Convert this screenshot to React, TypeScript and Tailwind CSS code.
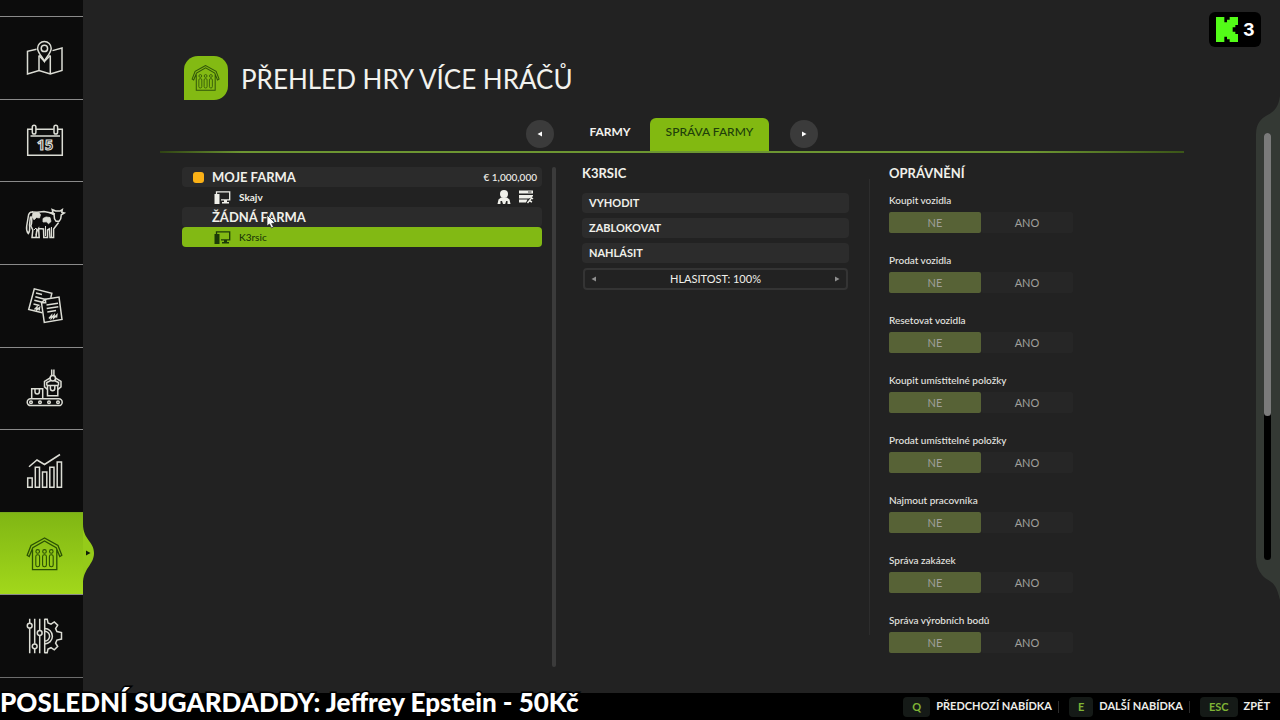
import { useState, type ReactNode } from "react";
import clsx from "clsx";

function Icon({ children, size = 36 }: { children: ReactNode; size?: number }) {
  return (
    <svg
      width={size}
      height={size}
      viewBox="0 0 36 36"
      fill="none"
      stroke="currentColor"
      strokeWidth={1.5}
      className="shrink-0 overflow-visible"
      aria-hidden="true"
    >
      {children}
    </svg>
  );
}

function MapIcon() {
  return (
    <Icon>
      <path d="M9.5 9.2 .5 11.3V34L12 30.5 23.3 34 35 30.5V8l-9.5 2.6M12 30.5V15.5M23.3 34V15.5" />
      <path d="M12 15.5 17.4 21.3 23.3 15.5" />
      <path d="M17.4 21.3C15.5 17 10.6 13 10.6 8.3a6.8 6.8 0 0 1 13.6 0c0 4.7-4.9 8.7-6.8 13Z" />
      <circle cx="17.4" cy="8.4" r="3.2" />
    </Icon>
  );
}

function CalendarIcon() {
  return (
    <Icon>
      <path d="M5 7.3H.7v26h34.6v-26H31M9 7.3h17.8M3.5 14h29.5" />
      <rect x="5.3" y="3.2" width="3.6" height="8.8" rx="1.8" />
      <rect x="27" y="3.2" width="3.6" height="8.8" rx="1.8" />
      <text
        x="18"
        y="28"
        textAnchor="middle"
        strokeWidth="1.2"
        className="font-['Open_Sans',sans-serif] text-[14px] font-bold"
      >
        15
      </text>
    </Icon>
  );
}

function CowIcon() {
  return (
    <Icon>
      <path d="M6 7C3 6.6 1.5 8.5 1.2 12L-.3 21c-.5 3 0 5.5 1.6 7.5C3.3 26 2.7 23 2.5 20L3.5 11.5" />
      <path d="M5 7l5 .2 7-.8 7.5 1.6 3.5 1M4 11.5c1.5 4 1 6-.2 9.5l2 4-.8 7.6h4l.6-6 2-3 .6 9h-3M12 23.5l4.5.5.3 8.6h3.7V25l2-1.2.5 8.8h3.6V24l5-6.5" />
      <path d="M27.5 5.5l-2.3-1 .8 2.7-2.5.8 3.6 1.8.4 4 1.6 2.5h3l1.6-2.5.6-4 3-1.8-2.5-.8.5-2.5-2 1.3h-4.8Z" />
      <path
        d="M6 8l6-.3 1.5 2-1 3.3-3-.5-2.5 2.3L5 12ZM16 13.5l3-1.5 4 .5 1 4-2.5 2.3-2-2L16 17Z"
        fill="currentColor"
        strokeWidth=".8"
      />
      <path d="M7 25l2-2 1 3-1 4M18.5 21v10M24.5 22v10" strokeWidth="1" />
    </Icon>
  );
}

function ContractsIcon() {
  return (
    <Icon>
      <path d="M15.3 24.8 1.7 21.5 7.3.8l17.5 4.5-1 4.5" />
      <path d="M18.2 11.3 32 9l3 22.5-17.7 3-2.8-19.7ZM14.5 14.8l4.2 0-.5-3.5" />
      <path d="M9 5l6 1.5M8.3 8.8 19.5 11.7M7.3 12.3l8 2M6.5 16l6 1.5" />
      <path d="M19.5 17l11.5-1.7M19.7 20.5 31.3 18.8M20.3 24 29 22.6" />
      <path d="M7.5 21.5l2.5-2.5-.3 3 2.8-2.5-.3 3M22 30.5l2.5-3-.2 2.7 2.8-3-.3 2.8 3-3-.3 2.7" />
    </Icon>
  );
}

function ProductionIcon() {
  return (
    <Icon>
      <rect x=".2" y="28.8" width="35" height="6.8" rx="3.4" />
      <circle cx="4" cy="32.2" r="1.3" />
      <circle cx="13" cy="32.2" r="1.3" />
      <circle cx="22" cy="32.2" r="1.3" />
      <circle cx="31" cy="32.2" r="1.3" />
      <path d="M4.7 28.8V18.7h11v10.1M8 18.7v3a2.2 2.2 0 0 0 4.4 0v-3" />
      <path d="M20.5 15.5h10.3v10.3H20.5ZM23.4 15.5v3a2.2 2.2 0 0 0 4.4 0v-3" />
      <path d="M24.7-.5v6M26.9-.5v6M23.2 7.8 17.5 11.3v5.5l3 2.5M28.3 7.8 34 11.3v5.5l-3 2.5M19.8 15.5v-3l4-2M31.5 15.5v-3l-4-2" />
      <circle cx="25.8" cy="8.3" r="2.7" />
    </Icon>
  );
}

function StatsIcon() {
  return (
    <Icon>
      <path d="M.7 25h4.5v9.3H.7ZM8.3 14.3h4.2v20H8.3ZM15.5 19h4.3v15.3h-4.3ZM22.8 14.3H27v20h-4.2ZM30.2 9h4.3v25.3h-4.3Z" />
      <path d="M2 13.7 10 7l7.5 4.5L33 1.5" />
    </Icon>
  );
}

function FarmIcon({ size }: { size?: number }) {
  return (
    <Icon size={size}>
      <path
        d="M17.5 2 4 9.5.2 19.3l2 1.2 3.6-8.7L17.5 5l11.7 6.8 3.6 8.7 2-1.2L31 9.5ZM5.5 13.5v20.2h24.3V13.5"
        strokeWidth="1.3"
      />
      {[10.7, 17.5, 24.3].map((x) => (
        <g key={x} strokeWidth="1.1">
          <circle cx={x} cy="15.4" r="1.8" />
          <rect x={x - 1.9} y="18.8" width="3.8" height="12" rx="1.7" />
        </g>
      ))}
    </Icon>
  );
}

function SettingsIcon() {
  return (
    <Icon>
      <path d="M2.7.7v4.5M2.7 10.2v25M7.7.7v25M7.7 30.8v4.5M12.7.7v11.8M12.7 17.5v17.8M17.7.7v34.6" />
      <circle cx="2.7" cy="7.7" r="2.4" />
      <circle cx="7.7" cy="28.3" r="2.4" />
      <circle cx="12.7" cy="15" r="2.4" />
      <path d="M17.7 1.2h2.5l.8 3.7 3 1.2 3.3-2.2 3.4 3.3-2.1 3.4 1.3 3 4.6 1v6.5l-4.6 1-1.3 3 2.1 3.4-3.4 3.4-3.3-2.2-3 1.3-.8 3.7h-2.5" />
      <path d="M17.7 10.5a7.7 7.7 0 0 1 0 15.4M17.7 13.3a4.9 4.9 0 0 1 0 9.8" />
    </Icon>
  );
}

const pages = [
  { name: "Mapa", icon: <MapIcon /> },
  { name: "Kalendář", icon: <CalendarIcon /> },
  { name: "Zvířata", icon: <CowIcon /> },
  { name: "Zakázky", icon: <ContractsIcon /> },
  { name: "Výroba", icon: <ProductionIcon /> },
  { name: "Statistiky", icon: <StatsIcon /> },
  { name: "Více hráčů", icon: <FarmIcon /> },
  { name: "Nastavení", icon: <SettingsIcon /> },
];

const permissions = [
  "Koupit vozidla",
  "Prodat vozidla",
  "Resetovat vozidla",
  "Koupit umístitelné položky",
  "Prodat umístitelné položky",
  "Najmout pracovníka",
  "Správa zakázek",
  "Správa výrobních bodů",
];

const shortcuts = [
  { key: "Q", label: "PŘEDCHOZÍ NABÍDKA" },
  { key: "E", label: "DALŠÍ NABÍDKA" },
  { key: "ESC", label: "ZPĚT" },
];

function Sidebar() {
  return (
    <nav className="flex w-[83px] shrink-0 flex-col bg-[#0c0c0c] pt-4 pb-[15px]">
      <ul className="grid flex-1 auto-rows-fr border-b border-[#6d6d6d]">
        {pages.map((page) => {
          const active = page.name === "Více hráčů";
          return (
            <li key={page.name} className="relative">
              <button
                aria-label={page.name}
                className={clsx(
                  "flex h-full w-full items-center justify-center border-t pl-[7px]",
                  active
                    ? "border-[#77a81c] bg-linear-to-b from-[#80b614] to-[#a2d81b] text-[#2b5204]"
                    : "border-[#8a8a8a] text-[#dcddd5]",
                )}
              >
                {page.icon}
              </button>
              {active && (
                <svg
                  className="absolute top-3 left-full"
                  width="12"
                  height="60"
                  viewBox="0 0 12 60"
                  aria-hidden="true"
                >
                  <path
                    d="M0 0C0 16 11 17 11 29S0 44 0 60Z"
                    fill="#95cb19"
                  />
                  <path d="M3 26.5 7.5 29 3 31.5Z" fill="#10200a" />
                </svg>
              )}
            </li>
          );
        })}
      </ul>
    </nav>
  );
}

function Arrow({ left = false }: { left?: boolean }) {
  return (
    <svg width="6" height="6" viewBox="0 0 6 6" fill="currentColor" aria-hidden="true">
      <path d={left ? "M5 .5v5L.5 3Z" : "M1 .5v5L5.5 3Z"} />
    </svg>
  );
}

function Tabs() {
  return (
    <div className="mt-[18px] flex flex-col">
      <div className="flex justify-center">
        <button
          aria-label="Předchozí karta"
          className="mt-0.5 flex size-7 items-center justify-center rounded-full bg-[#3b3b3b] text-white"
        >
          <Arrow left />
        </button>
        <div role="tablist" className="mr-[21px] ml-[22px] flex h-[33px] text-xs">
          <button
            role="tab"
            aria-selected={false}
            className="w-[74px] pr-1.5 pb-1.5 text-center font-bold text-[#f2f2ee]"
          >
            FARMY
          </button>
          <button
            role="tab"
            aria-selected={true}
            className="w-[119px] rounded-t-md bg-[#82b911] pb-1.5 text-center font-medium text-[#20400a]"
          >
            SPRÁVA FARMY
          </button>
        </div>
        <button
          aria-label="Další karta"
          className="mt-0.5 flex size-7 items-center justify-center rounded-full bg-[#3b3b3b] text-white"
        >
          <Arrow />
        </button>
      </div>
      <div className="h-0.5 bg-[linear-gradient(to_right,#2f4214,#6d9632_8%,#6d9632_85%,#3b5518)]" />
    </div>
  );
}

function ComputerIcon() {
  return (
    <svg width="17" height="13" viewBox="0 0 17 13" fill="currentColor" aria-hidden="true">
      <path d="M.5 3h5v10h-5Z" />
      <path d="M2.5 3V.8h13.2v8H7" fill="none" stroke="currentColor" strokeWidth="1.3" />
      <path d="M10 9h3v2h2v1.5H8V11h2Z" />
    </svg>
  );
}

function FarmList() {
  return (
    <section className="flex-[360] text-[#f0f0ea]">
      <div className="flex h-5 items-center rounded-sm bg-[#2b2b2b] pr-[5px] pl-[11px]">
        <span className="mr-2 size-[11px] rounded-[3px] bg-[#fbb116]" />
        <h2 className="pt-0.5 text-[13px] font-bold">MOJE FARMA</h2>
        <span className="ml-auto text-[10px] font-medium">€ 1,000,000</span>
      </div>
      <button className="flex h-5 w-full items-center gap-2 pr-2 pl-[32px] text-[10px] font-bold">
        <ComputerIcon />
        Skajv
        <svg
          className="ml-auto"
          width="14"
          height="14"
          viewBox="0 0 14 14"
          fill="currentColor"
          aria-hidden="true"
        >
          <circle cx="7" cy="4" r="4" />
          <path d="M4 7.5h6l2.5 2 1 4.5h-3V11h-1.3l-1 3H6l-1-3H3.5v3h-3l1-4.5Z" />
        </svg>
        <svg
          width="15"
          height="14"
          viewBox="0 0 15 14"
          fill="currentColor"
          aria-hidden="true"
        >
          <path d="M0 .5h14v3H0ZM0 5h14v1.2l-4 2.3H0ZM0 9.5h8.5L7 12.5H0Z" />
          <path d="M8.5 13 13 7.5M11.5 7l2.5 2M10 10.5l3 1.5" stroke="currentColor" strokeWidth="1.4" />
          <path d="M9 2h3.5" stroke="#222" strokeWidth=".8" />
        </svg>
      </button>
      <div className="flex h-5 items-center rounded-sm bg-[#2b2b2b] pl-[30px]">
        <h2 className="pt-0.5 text-[13px] font-bold">ŽÁDNÁ FARMA</h2>
      </div>
      <button className="flex h-5 w-full items-center gap-2 rounded-sm bg-[#82b914] pl-[32px] text-[10px] font-medium text-[#1c3a08]">
        <ComputerIcon />
        K3rsic
      </button>
    </section>
  );
}

function PlayerActions() {
  const [volume, setVolume] = useState(100);

  return (
    <section className="flex-[267] text-[#f0f0ea]">
      <h2 className="mb-3.5 text-[13px] leading-3 font-bold">K3RSIC</h2>
      <div className="flex flex-col gap-[5px]">
        {["VYHODIT", "ZABLOKOVAT", "NAHLÁSIT"].map((action) => (
          <button
            key={action}
            className="h-5 rounded-sm bg-[#2c2c2c] pl-[7px] text-left text-[11px] font-bold"
          >
            {action}
          </button>
        ))}
        <div className="mx-px flex h-[22px] items-center justify-between rounded-sm border-2 border-[#343434] px-1.5 text-[11px]">
          <button
            aria-label="Snížit hlasitost"
            className="text-[#8f8f8f]"
            onClick={() => setVolume(Math.max(0, volume - 10))}
          >
            <Arrow left />
          </button>
          <span>HLASITOST: {volume}%</span>
          <button
            aria-label="Zvýšit hlasitost"
            className="text-[#8f8f8f]"
            onClick={() => setVolume(Math.min(100, volume + 10))}
          >
            <Arrow />
          </button>
        </div>
      </div>
    </section>
  );
}

function Permission({ name }: { name: string }) {
  return (
    <div role="radiogroup" aria-label={name}>
      <div className="text-[10px] leading-4 font-medium text-[#e6e6e1]">{name}</div>
      <div className="mt-1 grid max-w-[184px] grid-cols-2 text-center text-[11px] leading-[21px]">
        <label className="relative rounded-xs bg-[#262626] text-[#a0a09c] has-checked:bg-[#576236]">
          <input type="radio" name={name} defaultChecked className="sr-only" />
          NE
        </label>
        <label className="relative rounded-xs bg-[#262626] text-[#a0a09c] has-checked:bg-[#576236]">
          <input type="radio" name={name} className="sr-only" />
          ANO
        </label>
      </div>
    </div>
  );
}

function ViewerBadge() {
  return (
    <div className="absolute top-3 right-[19px] flex h-[35px] w-[52px] items-center gap-[5px] rounded-md bg-black pl-[7px]">
      <svg width="22" height="25" viewBox="0 0 66 75" aria-hidden="true">
        <path
          d="M0 0H25V16H33V8H41V0H66V24H58V31H50V44H58V51H66V75H41V67H33V59H25V75H0Z"
          fill="#53fc18"
        />
      </svg>
      <span className="font-['Inter',sans-serif] text-lg font-bold text-white">3</span>
    </div>
  );
}

function EdgeScrollbar() {
  return (
    <div className="absolute top-[96px] right-0 h-[504px] w-6">
      <svg width="24" height="504" viewBox="0 0 24 504" aria-hidden="true">
        <path
          d="M24 0C21 20 11 16 4 25Q0 30 0 38V462Q0 472 6 479C14 488 19 482 24 504Z"
          fill="#343934"
        />
      </svg>
      <div className="absolute top-[37px] left-2 h-[427px] w-[7px] rounded-full bg-black">
        <div className="h-[283px] rounded-full bg-[#7a7a7a]" />
      </div>
    </div>
  );
}

export default function App() {
  return (
    <div className="relative flex min-h-screen flex-col overflow-hidden bg-[#222222] font-['Lato',sans-serif]">
      <div className="flex flex-1">
        <Sidebar />
        <main className="flex flex-1 flex-col pt-14 pr-24 pb-[26px] pl-[77px]">
          <header className="ml-6 flex h-11 items-center gap-[13px]">
            <div className="flex size-11 items-center justify-center rounded-[14px] rounded-bl-none bg-[#83ba13] text-[#31560a]">
              <FarmIcon size={28} />
            </div>
            <h1 className="pt-0.5 text-[26px] text-[#f2f2ee]">PŘEHLED HRY VÍCE HRÁČŮ</h1>
          </header>
          <Tabs />
          <div className="mt-3.5 ml-[22px] flex flex-1">
            <FarmList />
            <div className="mr-[26px] ml-2.5 w-1 rounded-full bg-[#3b3b3b]" />
            <PlayerActions />
            <div className="mt-3 mr-[19px] mb-8 ml-5 w-px bg-[#2d2d2d]" />
            <section className="flex-[295]">
              <h2 className="mb-[13px] text-[13px] leading-3 font-bold text-[#f0f0ea]">
                OPRÁVNĚNÍ
              </h2>
              <div className="flex flex-col gap-[19px]">
                {permissions.map((name) => (
                  <Permission key={name} name={name} />
                ))}
              </div>
            </section>
          </div>
        </main>
      </div>

      <footer className="flex h-[27px] items-center justify-end bg-black pr-2.5">
        {shortcuts.map((shortcut, i) => (
          <button
            key={shortcut.key}
            className={clsx(
              "flex items-center gap-1.5 text-[11px] font-bold text-[#ecece8]",
              i > 0 && "ml-1.5 before:mr-1 before:h-3 before:w-px before:bg-[#2c2c2c]",
            )}
          >
            <kbd className="rounded-sm bg-[#151a17] px-[9px] font-['Lato',sans-serif] leading-5 text-[#7fb335]">
              {shortcut.key}
            </kbd>
            {shortcut.label}
          </button>
        ))}
      </footer>

      <EdgeScrollbar />
      <ViewerBadge />
      <p className="absolute bottom-0 left-0 text-[26px] leading-9 font-black text-white [paint-order:stroke] [-webkit-text-stroke:3px_black]">
        POSLEDNÍ SUGARDADDY: Jeffrey Epstein - 50Kč
      </p>
      <svg
        className="absolute top-[214px] left-[266px]"
        width="10"
        height="15"
        viewBox="0 0 10 15"
        aria-hidden="true"
      >
        <path
          d="M1 1v11l2.5-2 2 4 2-1-1.8-3.5L9 9Z"
          fill="#fff"
          stroke="#222"
          strokeWidth=".7"
        />
      </svg>
    </div>
  );
}
